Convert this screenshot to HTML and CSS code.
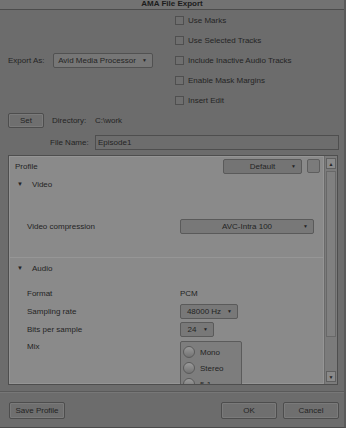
FILE: index.html
```html
<!DOCTYPE html>
<html>
<head>
  <meta charset="UTF-8">
  <title>AMA File Export</title>
  <link rel="stylesheet" href="styles.css">
</head>
<body>
  <div class="dialog">
    <div class="title">AMA File Export</div>

    <div class="top">
      <div class="export">
        <span class="lbl">Export As:</span>
        <div class="select wide">Avid Media Processor <span class="arrow">▼</span></div>
      </div>
      <div class="checks">
        <div class="check"><span class="box"></span>Use Marks</div>
        <div class="check"><span class="box"></span>Use Selected Tracks</div>
        <div class="check"><span class="box"></span>Include Inactive Audio Tracks</div>
        <div class="check"><span class="box"></span>Enable Mask Margins</div>
        <div class="check"><span class="box"></span>Insert Edit</div>
      </div>
    </div>

    <div class="dir">
      <div class="btn set">Set</div>
      <span class="dlbl">Directory:</span>
      <span>C:\work</span>
    </div>

    <div class="fname">
      <span class="flbl">File Name:</span>
      <div class="input">Episode1</div>
    </div>

    <div class="panel">
      <div class="content">
        <div class="head">
          <span>Profile</span>
          <div class="select psel">Default <span class="arrow">▼</span></div>
          <div class="small"></div>
        </div>

        <div class="section"><span class="tri">▼</span>Video</div>
        <div class="row vc">
          <span class="key">Video compression</span>
          <div class="select vsel">AVC-Intra 100 <span class="arrow">▼</span></div>
        </div>

        <div class="sep"></div>
        <div class="section"><span class="tri">▼</span>Audio</div>
        <div class="row fmt">
          <span class="key">Format</span>
          <span>PCM</span>
        </div>
        <div class="row samp">
          <span class="key">Sampling rate</span>
          <div class="select ssel">48000 Hz <span class="arrow">▼</span></div>
        </div>
        <div class="row bits">
          <span class="key">Bits per sample</span>
          <div class="select bsel">24 <span class="arrow">▼</span></div>
        </div>
        <div class="row mix">
          <span class="key">Mix</span>
          <div class="mixbox">
            <div class="radio"><span class="dot"></span>Mono</div>
            <div class="radio"><span class="dot"></span>Stereo</div>
            <div class="radio"><span class="dot"></span>5.1</div>
          </div>
        </div>
      </div>
      <div class="scroll">
        <div class="sarrow">▲</div>
        <div class="track"><div class="thumb"></div></div>
        <div class="sarrow">▼</div>
      </div>
    </div>

    <div class="line"></div>

    <div class="bottom">
      <div class="btn save">Save Profile</div>
      <div class="btn ok">OK</div>
      <div class="btn cancel">Cancel</div>
    </div>
  </div>
</body>
</html>
```

FILE: styles.css
```css
body {
  margin: 0;
  background-color: #6c6c6c;
  color: #242424;
  font-family: "Liberation Sans", Arial, sans-serif;
  font-size: 8px;
}
.dialog {
  width: 346px;
  height: 428px;
  box-sizing: border-box;
  border-right: 2px solid #5a5a5a;
  border-bottom: 1px solid #4a4a4a;
  overflow: hidden;
}
.title {
  height: 9px;
  line-height: 8px;
  text-align: center;
  font-weight: bold;
  background-color: #727272;
  border-bottom: 1px solid #4c4c4c;
  color: #1c1c1c;
}
.top {
  display: flex;
  height: 100px;
}
.export {
  width: 175px;
  display: flex;
  align-items: center;
}
.lbl {
  margin-left: 8px;
  width: 45px;
}
.select {
  display: flex;
  align-items: center;
  justify-content: center;
  position: relative;
  box-sizing: border-box;
  height: 15px;
  background-color: #767676;
  border: 1px solid #515151;
  border-radius: 2px;
}
.arrow {
  position: absolute;
  right: 5px;
  font-size: 5px;
}
.wide {
  width: 100px;
  padding-right: 12px;
}
.check {
  height: 20px;
  display: flex;
  align-items: center;
}
.box {
  width: 9px;
  height: 9px;
  box-sizing: border-box;
  border: 1px solid #4f4f4f;
  background-color: #6f6f6f;
  margin-right: 4px;
}
.dir {
  display: flex;
  align-items: center;
  margin-top: 3px;
  height: 15px;
}
.btn {
  box-sizing: border-box;
  height: 15px;
  display: flex;
  align-items: center;
  justify-content: center;
  background-color: #6f6f6f;
  border: 1px solid #4d4d4d;
  box-shadow: inset 0 0 0 1px #7a7a7a;
  border-radius: 2px;
}
.set {
  margin-left: 8px;
  width: 36px;
}
.dlbl {
  margin-left: 8px;
  width: 43px;
}
.fname {
  display: flex;
  align-items: center;
  margin-top: 7px;
  height: 15px;
}
.flbl {
  margin-left: 50px;
  width: 45px;
}
.input {
  flex: 1;
  margin-right: 5px;
  box-sizing: border-box;
  height: 15px;
  padding-left: 2px;
  display: flex;
  align-items: center;
  background-color: #6d6d6d;
  border: 1px solid #4e4e4e;
}
.panel {
  margin: 5px 6px 0 8px;
  height: 230px;
  box-sizing: border-box;
  border: 1px solid #4e4e4e;
  background-color: #8a8a8a;
  display: flex;
  overflow: hidden;
}
.content {
  flex: 1;
  box-shadow: inset 0 0 0 1px #959595;
}
.head {
  display: flex;
  align-items: center;
  height: 16px;
  margin-top: 2px;
  padding-left: 6px;
}
.head > span {
  flex: 1;
}
.psel {
  width: 79px;
  background-color: #747474;
  border-color: #5a5a5a;
}
.small {
  width: 13px;
  height: 14px;
  box-sizing: border-box;
  margin: 0 4px 0 5px;
  background-color: #7b7b7b;
  border: 1px solid #5e5e5e;
  border-radius: 2px;
}
.section {
  height: 16px;
  display: flex;
  align-items: center;
  margin-top: 2px;
}
.tri {
  font-size: 6px;
  margin: 0 9px 0 8px;
}
.row {
  display: flex;
  align-items: center;
  height: 16px;
}
.key {
  margin-left: 18px;
  width: 153px;
}
.vc {
  margin-top: 26px;
}
.vsel {
  width: 134px;
}
.sep {
  height: 1px;
  margin-top: 23px;
  background-color: #969696;
}
.fmt {
  margin-top: 9px;
}
.row .select {
  background-color: #787878;
  border-color: #5a5a5a;
}
.samp {
  margin-top: 2px;
}
.ssel {
  width: 58px;
  padding-right: 10px;
}
.bits {
  margin-top: 2px;
}
.bsel {
  width: 34px;
  padding-right: 10px;
}
.mix {
  align-items: flex-start;
  margin-top: 4px;
  height: 60px;
}
.mix .key {
  padding-top: 1px;
}
.mixbox {
  width: 62px;
  box-sizing: border-box;
  background-color: #7d7d7d;
  border: 1px solid #5b5b5b;
  border-radius: 2px;
  padding-top: 2px;
}
.radio {
  display: flex;
  align-items: center;
  height: 16px;
}
.dot {
  width: 12px;
  height: 12px;
  box-sizing: border-box;
  border-radius: 50%;
  border: 1px solid #5a5a5a;
  background: linear-gradient(#9a9a9a, #727272);
  margin: 0 5px 0 2px;
}
.scroll {
  width: 12px;
  display: flex;
  flex-direction: column;
  background-color: #7b7b7b;
  border-left: 1px solid #6a6a6a;
}
.sarrow {
  height: 9px;
  margin: 2px 1px;
  font-size: 5px;
  display: flex;
  align-items: center;
  justify-content: center;
  background-color: #8a8a8a;
  border: 1px solid #606060;
}
.track {
  flex: 1;
}
.thumb {
  height: 164px;
  margin: 0 1px;
  background-color: #808080;
  border: 1px solid #686868;
}
.line {
  margin-top: 6px;
  height: 1px;
  background-color: #5a5a5a;
  border-bottom: 1px solid #777777;
}
.bottom {
  display: flex;
  margin-top: 9px;
  padding: 0 5px 0 9px;
}
.bottom .btn {
  height: 17px;
  width: 56px;
}
.save {
  margin-right: auto;
}
.ok {
  margin-right: 6px;
}
```
